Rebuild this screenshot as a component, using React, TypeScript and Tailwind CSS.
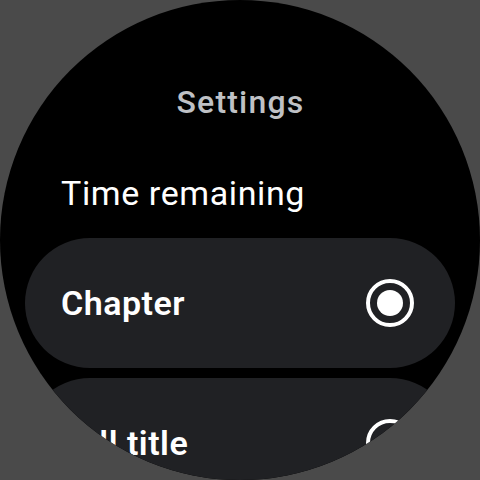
const options = [
  { label: "Chapter", selected: true },
  { label: "Full title", selected: false },
];

function Radio({ selected }: { selected: boolean }) {
  return (
    <div className="flex h-[48px] w-[48px] shrink-0 items-center justify-center rounded-full border-[4px] border-white">
      {selected && <div className="h-[26px] w-[26px] rounded-full bg-white" />}
    </div>
  );
}

export default function App() {
  return (
    <div className="h-[480px] w-[480px] bg-[#4a4a4a] font-['Roboto',sans-serif]">
      <div className="flex h-[480px] w-[480px] flex-col overflow-hidden rounded-full bg-black">
        <h1 className="mt-[85px] pl-[1px] text-center text-[32px] font-medium leading-[34px] tracking-[1.2px] text-[#bfc1c5]">
          Settings
        </h1>

        <div className="mt-[54px] h-[40px] pl-[61px] text-[34px] leading-[40px] tracking-[0.6px] text-white">
          Time remaining
        </div>

        <div className="mt-[25px] flex flex-col gap-[10px] px-[25px]">
          {options.map((o) => (
            <div
              key={o.label}
              className="flex h-[130px] shrink-0 items-center justify-between rounded-full bg-[#202124] pl-[36px] pr-[41px]"
            >
              <span className="text-[34px] font-semibold leading-[40px] tracking-[0.5px] text-white">
                {o.label}
              </span>
              <Radio selected={o.selected} />
            </div>
          ))}
        </div>
      </div>
    </div>
  );
}
